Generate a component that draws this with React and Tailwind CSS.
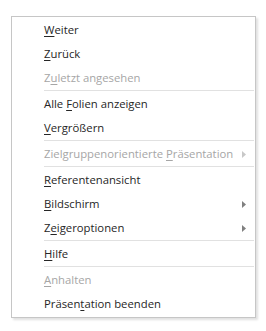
import React from 'react';

const items = [
  { pre: '', key: 'W', post: 'eiter' },
  { pre: '', key: 'Z', post: 'urück' },
  { pre: 'Z', key: 'u', post: 'letzt angesehen', disabled: true },
  { sep: true },
  { pre: 'Alle ', key: 'F', post: 'olien anzeigen' },
  { pre: '', key: 'V', post: 'ergrößern' },
  { sep: true },
  { pre: 'Zielgruppenorientierte ', key: 'P', post: 'räsentation', disabled: true, sub: true },
  { sep: true },
  { pre: '', key: 'R', post: 'eferentenansicht' },
  { pre: '', key: 'B', post: 'ildschirm', sub: true },
  { pre: 'Z', key: 'e', post: 'igeroptionen', sub: true },
  { sep: true },
  { pre: '', key: 'H', post: 'ilfe' },
  { sep: true },
  { pre: '', key: 'A', post: 'nhalten', disabled: true },
  { pre: 'Präsen', key: 't', post: 'ation beenden' },
];

function Arrow({ disabled }) {
  return (
    <svg width="4" height="7" viewBox="0 0 4 7" className="shrink-0">
      <path d="M0 0 L4 3.5 L0 7 Z" fill={disabled ? '#c8c8c8' : '#808080'} />
    </svg>
  );
}

export default function App() {
  return (
    <div className="min-h-[331px] bg-white pt-[16px] pl-[11px]" style={{ fontFamily: '"Open Sans", "Noto Sans", sans-serif' }}>
      <div className="w-[245px] border border-[#c6c6c6] bg-white py-[1px] shadow-[2px_2px_2px_rgba(0,0,0,0.12)]">
        {items.map((it, i) =>
          it.sep ? (
            <div key={i} className="h-[2px] pl-[32px] pr-[1px]">
              <div className="h-px bg-[#e1e1e1]" />
            </div>
          ) : (
            <div key={i} className={`h-6 flex items-center pl-[32px] pr-[9px] text-[11.3px] ${it.disabled ? 'text-[#a6a6a6]' : 'text-[#262626]'}`}>
              <span className="flex-1 whitespace-nowrap">
                {it.pre}<span className="underline underline-offset-2">{it.key}</span>{it.post}
              </span>
              {it.sub && <Arrow disabled={it.disabled} />}
            </div>
          )
        )}
      </div>
    </div>
  );
}
